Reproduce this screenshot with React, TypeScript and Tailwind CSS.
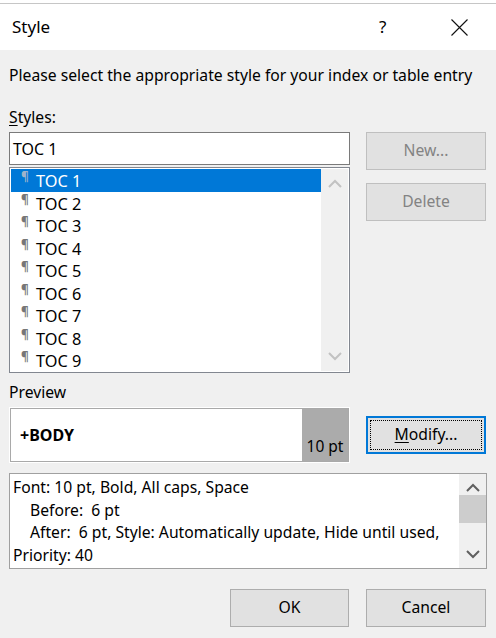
import React from 'react';

const ui = { fontFamily: '"Noto Sans", "Open Sans", sans-serif' };

function Chevron({ up, color }: { up?: boolean; color: string }) {
  return (
    <svg width="14" height="9" viewBox="0 0 14 9">
      <path d={up ? 'M1 8 L7 2 L13 8' : 'M1 1 L7 7 L13 1'} fill="none" stroke={color} strokeWidth="2" />
    </svg>
  );
}

const styles = ['TOC 1', 'TOC 2', 'TOC 3', 'TOC 4', 'TOC 5', 'TOC 6', 'TOC 7', 'TOC 8', 'TOC 9'];

export default function App() {
  return (
    <div className="w-[496px] h-[638px] bg-[#f0f0f0] text-[15.7px] text-black overflow-hidden" style={ui}>
      {/* title bar */}
      <div className="bg-white pt-[3px]">
        <div className="h-[47px] border-t border-[#c6c6c6] flex items-center pl-[12px]">
          <span className="text-[17px] flex-1">Style</span>
          <span className="text-[17px] w-[10px] mr-[62px]">?</span>
          <svg width="17" height="17" viewBox="0 0 17 17" className="mr-[28px]">
            <path d="M0.5 0.5 L16.5 16.5 M16.5 0.5 L0.5 16.5" stroke="#111" strokeWidth="1.1" />
          </svg>
        </div>
      </div>

      <div className="pl-[9px] pr-[10px]">
        <div className="pt-[14px] leading-[22px] whitespace-nowrap">Please select the appropriate style for your index or table entry</div>
        <div className="mt-[20px] leading-[22px]"><span className="underline underline-offset-2">S</span>tyles:</div>

        <div className="mt-[4px] flex gap-[16px]">
          <div className="w-[341px]">
            <div className="h-[33px] bg-white border border-[#7a7a7a] flex items-center px-[3px] text-[16px]">TOC 1</div>
            <div className="mt-[2px] h-[206px] bg-white border border-[#828790] p-[1px] flex">
              <div className="flex-1 flex flex-col">
                {styles.map((s, i) => (
                  <div
                    key={s}
                    className={`h-[22.5px] flex items-start pl-[10px] ${i === 0 ? 'bg-[#0078d7] text-white' : ''}`}
                  >
                    <span className={`text-[12px] font-bold leading-none mt-[2px] w-[15px] ${i === 0 ? 'text-[#9fb3ca]' : 'text-[#777]'}`}>¶</span>
                    <span className="leading-[22.5px] mt-[1px] text-[16.3px]">{s}</span>
                  </div>
                ))}
              </div>
              <div className="w-[27px] bg-[#f0f0f0] flex flex-col items-center justify-between py-[10px]">
                <Chevron up color="#c2c2c2" />
                <Chevron color="#c2c2c2" />
              </div>
            </div>
          </div>
          <div className="w-[120px] flex flex-col gap-[13px]">
            <button className="h-[38px] bg-[#e1e1e1] border border-[#bfbfbf] text-[#838383]">New...</button>
            <button className="h-[38px] bg-[#e1e1e1] border border-[#bfbfbf] text-[#838383]">Delete</button>
          </div>
        </div>

        <div className="mt-[8px] leading-[22px]">Preview</div>
        <div className="mt-[4px] flex items-center gap-[16px]">
          <div className="w-[341px] h-[56px] border border-white">
            <div className="h-full border border-[#a9a9a9] bg-white flex">
              <div className="flex-1 pl-[9px] pt-[14px] font-bold text-[16px]">+BODY</div>
              <div className="w-[46px] bg-[#ababab] flex items-end justify-center pb-[3px] text-[15.5px]">10 pt</div>
            </div>
          </div>
          <button className="w-[120px] h-[38px] bg-[#e1e1e1] border-2 border-[#0078d7] p-[2px]">
            <div className="h-full border border-dotted border-black flex items-center justify-center">
              <span><span className="underline underline-offset-2">M</span>odify...</span>
            </div>
          </button>
        </div>

        <div className="mt-[10px] w-[478px] h-[96px] bg-white border border-[#a0a0a0] flex">
          <div className="flex-1 pl-[3px] pt-[2px] leading-[22.5px] whitespace-pre">
            <div>Font: 10 pt, Bold, All caps, Space</div>
            <div className="pl-[17px]">Before:  6 pt</div>
            <div className="pl-[17px]">After:  6 pt, Style: Automatically update, Hide until used,</div>
            <div>Priority: 40</div>
          </div>
          <div className="w-[27px] bg-[#f0f0f0] flex flex-col items-center py-[9px]">
            <Chevron up color="#606060" />
            <div className="mt-[3px] w-full h-[28px] bg-[#cdcdcd]" />
            <div className="flex-1" />
            <Chevron color="#606060" />
          </div>
        </div>

        <div className="mt-[20px] flex justify-end gap-[17px]">
          <button className="w-[119px] h-[38px] bg-[#e1e1e1] border border-[#adadad]">OK</button>
          <button className="w-[120px] h-[38px] bg-[#e1e1e1] border border-[#adadad]">Cancel</button>
        </div>
      </div>
    </div>
  );
}
